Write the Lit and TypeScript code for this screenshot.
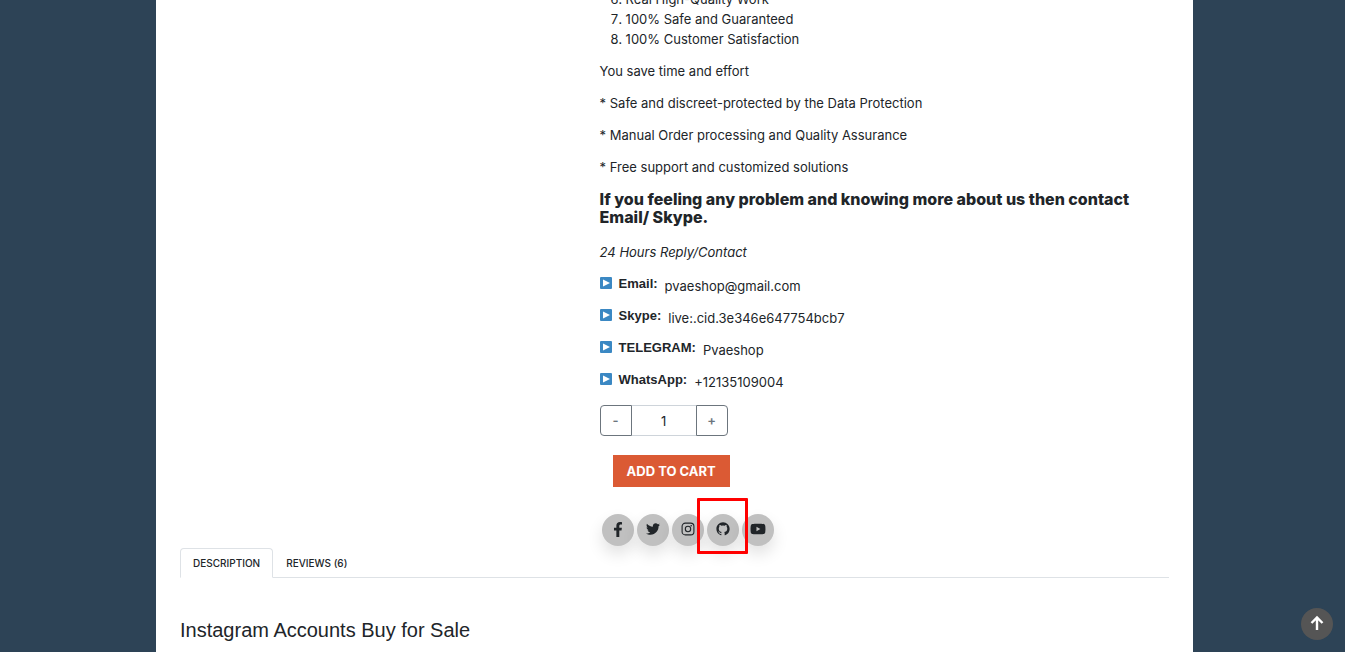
import { LitElement, html, css, svg } from "lit";
import { customElement, state } from "lit/decorators.js";

const icons = {
  facebook: svg`<svg viewBox="0 0 320 512" width="10" height="15"><path d="M279.14 288l14.22-92.66h-88.91v-60.13c0-25.35 12.42-50.06 52.24-50.06h40.42V6.26S260.43 0 225.36 0c-73.22 0-121.08 44.38-121.08 124.72v70.62H22.89V288h81.39v224h100.17V288z"/></svg>`,
  twitter: svg`<svg viewBox="0 0 512 512" width="14" height="14"><path d="M459.37 151.716c.325 4.548.325 9.097.325 13.645 0 138.72-105.583 298.558-298.558 298.558-59.452 0-114.68-17.219-161.137-47.106 8.447.974 16.568 1.299 25.34 1.299 49.055 0 94.213-16.568 130.274-44.832-46.132-.975-84.792-31.188-98.112-72.772 6.498.974 12.995 1.624 19.818 1.624 9.421 0 18.843-1.3 27.614-3.573-48.081-9.747-84.143-51.98-84.143-102.985v-1.299c13.969 7.797 30.214 12.67 47.431 13.319-28.264-18.843-46.781-51.005-46.781-87.391 0-19.492 5.197-37.36 14.294-52.954 51.655 63.675 129.3 105.258 216.365 109.807-1.624-7.797-2.599-15.918-2.599-24.04 0-57.828 46.782-104.934 104.934-104.934 30.213 0 57.502 12.67 76.67 33.137 23.715-4.548 46.456-13.32 66.599-25.34-7.798 24.366-24.366 44.833-46.132 57.827 21.117-2.273 41.584-8.122 60.426-16.243-14.292 20.791-32.161 39.308-52.628 54.253z"/></svg>`,
  instagram: svg`<svg viewBox="0 0 14 14" width="14" height="14"><rect x="1.1" y="1.1" width="11.8" height="11.8" rx="3.2" fill="none" stroke="currentColor" stroke-width="1.1"/><circle cx="7" cy="7" r="2.7" fill="none" stroke="currentColor" stroke-width="1.1"/><circle cx="10.2" cy="3.8" r=".8"/></svg>`,
  github: svg`<svg viewBox="0 0 24 24" width="16" height="16"><path d="M12.026 2c-5.509 0-9.974 4.465-9.974 9.974 0 4.406 2.857 8.145 6.821 9.465.499.09.679-.217.679-.481 0-.237-.008-.865-.011-1.696-2.775.602-3.361-1.338-3.361-1.338-.452-1.152-1.107-1.459-1.107-1.459-.905-.619.069-.605.069-.605 1.002.07 1.527 1.028 1.527 1.028.89 1.524 2.336 1.084 2.902.829.091-.645.351-1.085.635-1.334-2.214-.251-4.542-1.107-4.542-4.93 0-1.087.389-1.979 1.024-2.675-.101-.253-.446-1.268.099-2.64 0 0 .837-.269 2.742 1.021a9.582 9.582 0 0 1 2.496-.336 9.554 9.554 0 0 1 2.496.336c1.906-1.291 2.742-1.021 2.742-1.021.545 1.372.203 2.387.099 2.64.64.696 1.024 1.587 1.024 2.675 0 3.833-2.33 4.675-4.552 4.922.355.308.675.916.675 1.846 0 1.334-.012 2.41-.012 2.737 0 .267.178.577.687.479C19.146 20.115 22 16.379 22 11.974 22 6.465 17.535 2 12.026 2z"/></svg>`,
  youtube: svg`<svg viewBox="0 0 576 512" width="16" height="14"><path d="M549.655 124.083c-6.281-23.65-24.787-42.276-48.284-48.597C458.781 64 288 64 288 64S117.22 64 74.629 75.486c-23.497 6.322-42.003 24.947-48.284 48.597-11.412 42.867-11.412 132.305-11.412 132.305s0 89.438 11.412 132.305c6.281 23.65 24.787 41.5 48.284 47.821C117.22 448 288 448 288 448s170.78 0 213.371-11.486c23.497-6.321 42.003-24.171 48.284-47.821 11.412-42.867 11.412-132.305 11.412-132.305s0-89.438-11.412-132.305zm-317.51 213.508V175.185l142.739 81.205-142.739 81.201z"/></svg>`,
};

const contacts = [
  { label: "Email:", value: "pvaeshop@gmail.com" },
  { label: "Skype:", value: "live:.cid.3e346e647754bcb7" },
  { label: "TELEGRAM:", value: "Pvaeshop" },
  { label: "WhatsApp:", value: "+12135109004" },
];

@customElement("app-root")
export class AppRoot extends LitElement {
  static styles = css`
    :host { display: block; height: 100vh; overflow: hidden; background: #2d4356; padding: 0 152px 0 156px; box-sizing: border-box; color: #212529; font: 13px/20px Inter, "Open Sans", sans-serif; }
    .page { background: #fff; height: 100%; padding: 0 24px; box-sizing: border-box; overflow: hidden; }
    .product { display: grid; grid-template-columns: 40% 1fr; column-gap: 24px; margin-top: -11px; }
    .info { display: flex; flex-direction: column; }
    p, ol { margin: 0 0 12px; }
    ol { padding-left: 26px; }
    .lead { margin: 1px 0 16px; font: 800 16px/18px Inter, "Liberation Sans", sans-serif; }
    .contact { display: flex; gap: 7px; }
    .mark { width: 12px; height: 12px; margin-top: 3px; }
    .contact b { font-family: "Liberation Sans", Arial, sans-serif; font-size: 13px; }
    .contact span { padding-top: 2px; line-height: 20px; height: 18px; }
    .qty { display: flex; width: 128px; height: 31px; margin: 3px 0 19px; }
    .qty button { width: 32px; padding: 0 0 2px; border: 1px solid #6c757d; background: #fff; color: #6c757d; font: inherit; font-weight: 600; }
    .qty .less { border-radius: 4px 0 0 4px; }
    .qty .more { border-radius: 0 4px 4px 0; }
    .qty input { flex: 1; min-width: 0; padding: 0; border: solid #ced4da; border-width: 1px 0; border-radius: 0; text-align: center; color: #212529; font: inherit; }
    .cart { align-self: flex-start; margin-left: 13px; height: 32px; padding: 0 14px; border: 0; background: #db5a34; color: #fff; font: inherit; font-weight: 700; }
    .social { display: flex; gap: 3px; margin: 27px 0 0 2px; }
    .social a { position: relative; display: grid; place-items: center; width: 32px; height: 30px; padding-bottom: 2px; border-radius: 50%; background: #c0c0c0; color: #212529; box-shadow: 0 8px 16px rgba(0, 0, 0, 0.12); }
    svg { display: block; fill: currentColor; }
    .frame { position: absolute; z-index: 2; inset: -16px -9px -8px -10px; border: 3px solid #f00; border-radius: 1px; pointer-events: none; }
    .tabs { display: flex; margin-top: 2px; border-bottom: 1px solid #dee2e6; }
    .tabs button { height: 30px; margin-bottom: -1px; padding: 0 12px; border: 1px solid transparent; border-radius: 4px 4px 0 0; background: none; color: #212529; font: 500 10px/20px Inter, sans-serif; }
    .tabs .active { background: #fff; border-color: #dee2e6 #dee2e6 #fff; }
    h2 { margin: 40px 0 0; font: 400 20px/24px "Liberation Sans", Arial, sans-serif; }
    .top { position: fixed; right: 12px; bottom: 12px; width: 32px; height: 32px; display: grid; place-items: center; padding: 0 0 2px; border: 0; border-radius: 50%; background: #555; color: #fff; }
  `;

  @state() private quantity = 1;
  @state() private tab = 0;

  private step(by: number) {
    this.quantity = Math.max(1, this.quantity + by);
  }

  render() {
    return html`
      <main class="page">
        <section class="product">
          <div></div>
          <div class="info">
            <ol start="6">
              <li>Real High-Quality Work</li>
              <li>100% Safe and Guaranteed</li>
              <li>100% Customer Satisfaction</li>
            </ol>
            <p>You save time and effort</p>
            <p>* Safe and discreet-protected by the Data Protection</p>
            <p>* Manual Order processing and Quality Assurance</p>
            <p>* Free support and customized solutions</p>
            <h3 class="lead">If you feeling any problem and knowing more about us then contact Email/ Skype.</h3>
            <p><em>24 Hours Reply/Contact</em></p>
            ${contacts.map((c) => html`
              <p class="contact">
                <svg class="mark" viewBox="0 0 12 12" aria-hidden="true"><rect width="12" height="12" rx="1" fill="#3b88c3"/><path d="M3 2.5 10 6 3 9.5z" fill="#fff"/></svg>
                <b>${c.label}</b><span>${c.value}</span>
              </p>`)}
            <div class="qty">
              <button class="less" aria-label="Decrease quantity" @click=${() => this.step(-1)}>-</button>
              <input aria-label="Quantity" .value=${String(this.quantity)} />
              <button class="more" aria-label="Increase quantity" @click=${() => this.step(1)}>+</button>
            </div>
            <button class="cart">ADD TO CART</button>
            <nav class="social">
              ${Object.entries(icons).map(([name, icon]) => html`<a href="#" aria-label=${name}>${icon}${name === "github" ? html`<span class="frame"></span>` : ""}</a>`)}
            </nav>
          </div>
        </section>
        <div class="tabs" role="tablist">
          ${["DESCRIPTION", "REVIEWS (6)"].map((t, i) => html`<button role="tab" aria-selected=${this.tab === i} class=${this.tab === i ? "active" : ""} @click=${() => (this.tab = i)}>${t}</button>`)}
        </div>
        <h2>Instagram Accounts Buy for Sale</h2>
      </main>
      <button class="top" aria-label="Back to top">
        <svg viewBox="0 0 14 16" width="14" height="16"><path d="M7 15V2.500M1.500 8 7 2.500 12.500 8" fill="none" stroke="currentColor" stroke-width="2.400"/></svg>
      </button>
    `;
  }
}
